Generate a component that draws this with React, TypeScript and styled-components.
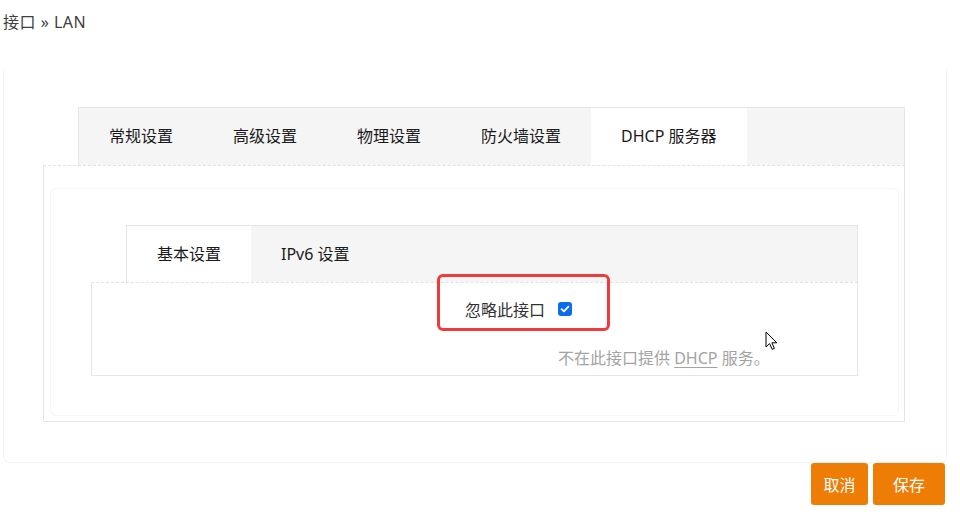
import React from 'react';
import styled, { createGlobalStyle } from 'styled-components';

const GlobalStyle = createGlobalStyle`
  html, body {
    margin: 0;
    padding: 0;
    background: #ffffff;
  }
  body {
    font-family: "Noto Sans", "Noto Sans CJK SC", sans-serif;
    color: #222;
  }
`;

const Page = styled.div`
  width: 960px;
  height: 519px;
  overflow: hidden;
  position: relative;
`;

const Crumb = styled.div`
  margin: 0 0 0 3px;
  padding-top: 10px;
  height: 24px;
  line-height: 24px;
  font-size: 16px;
  letter-spacing: 0.5px;
  color: #404040;
`;

const Card = styled.div`
  margin: 35px 13px 0 3px;
  padding: 37px 41px 40px 39px;
  border: 1px solid #f4f4f4;
  border-top-color: transparent;
  border-radius: 0 0 6px 6px;
`;

const TabBar = styled.div<{ $inset: number }>`
  display: flex;
  margin-left: ${(p) => p.$inset}px;
  background: #f5f5f5;
  border: 1px solid #e6e6e6;
  border-bottom: none;
`;

const Tab = styled.div<{ $active?: boolean; $h: number }>`
  height: ${(p) => p.$h}px;
  line-height: ${(p) => p.$h}px;
  padding: 0 30px;
  font-size: 16px;
  color: #1a1a1a;
  background: ${(p) => (p.$active ? '#ffffff' : 'transparent')};
  white-space: nowrap;
`;

const Panel = styled.div<{ $pad: string }>`
  position: relative;
  padding: ${(p) => p.$pad};
  border: 1px solid #e6e6e6;
  border-top: 1px dashed #e2e2e2;
`;

const Inner = styled.div`
  padding: 36px 40px 39px 40px;
  border: 1px solid #f5f5f5;
  border-radius: 6px;
`;

const FieldRow = styled.div`
  display: grid;
  grid-template-columns: 466px 1fr;
  align-items: center;
  height: 26px;
  margin-top: 13px;
`;

const Label = styled.label`
  text-align: right;
  padding-right: 13px;
  font-size: 16px;
  color: #333;
`;

const Check = styled.span`
  display: inline-flex;
  align-items: center;
  justify-content: center;
  width: 14px;
  height: 14px;
  border-radius: 3px;
  background: #0b6cf0;
`;

const Help = styled.div`
  margin: 26px 0 0 466px;
  padding-bottom: 7px;
  font-size: 16px;
  color: #a3a3a3;
  line-height: 20px;
  white-space: nowrap;
`;

const Abbr = styled.span`
  text-decoration: underline;
  text-underline-offset: 3px;
`;

const Highlight = styled.div`
  position: absolute;
  left: 345px;
  top: -9px;
  width: 167px;
  height: 51px;
  border: 3px solid #ee3c3c;
  border-radius: 6px;
  pointer-events: none;
`;

const Cursor = styled.svg`
  position: absolute;
  left: 673px;
  top: 48px;
`;

const Actions = styled.div`
  display: flex;
  justify-content: flex-end;
  gap: 5px;
  padding-right: 15px;
`;

const Button = styled.button<{ $w: number }>`
  width: ${(p) => p.$w}px;
  height: 42px;
  border: none;
  border-radius: 3px;
  background: #ee7d06;
  color: #fff;
  font-family: "Noto Sans CJK SC", sans-serif;
  font-size: 16px;
  cursor: pointer;
`;

const mainTabs = ['常规设置', '高级设置', '物理设置', '防火墙设置', 'DHCP 服务器'];
const subTabs = ['基本设置', 'IPv6 设置'];

export default function App() {
  return (
    <Page>
      <GlobalStyle />
      <Crumb>接口 » LAN</Crumb>
      <Card>
        <TabBar $inset={35}>
          {mainTabs.map((t, i) => (
            <Tab key={t} $h={57} $active={i === 4}>{t}</Tab>
          ))}
        </TabBar>
        <Panel $pad="22px 5px 5px 6px">
          <Inner>
            <TabBar $inset={35}>
              {subTabs.map((t, i) => (
                <Tab key={t} $h={56} $active={i === 0}>{t}</Tab>
              ))}
            </TabBar>
            <Panel $pad="0">
              <FieldRow>
                <Label>忽略此接口</Label>
                <Check>
                  <svg width="10" height="10" viewBox="0 0 10 10">
                    <path d="M1.6 5.2 L4 7.4 L8.4 2.6" fill="none" stroke="#fff" strokeWidth="1.8" strokeLinecap="round" strokeLinejoin="round" />
                  </svg>
                </Check>
              </FieldRow>
              <Help>
                不在此接口提供 <Abbr>DHCP</Abbr> 服务。
              </Help>
              <Highlight />
              <Cursor width="14" height="20" viewBox="0 0 14 20">
                <path d="M1 1 L1 16 L4.6 12.6 L7.2 18.4 L9.4 17.4 L6.9 11.8 L11.8 11.8 Z" fill="#fff" stroke="#000" strokeWidth="1" strokeLinejoin="round" />
              </Cursor>
            </Panel>
          </Inner>
        </Panel>
      </Card>
      <Actions>
        <Button $w={57}>取消</Button>
        <Button $w={72}>保存</Button>
      </Actions>
    </Page>
  );
}
